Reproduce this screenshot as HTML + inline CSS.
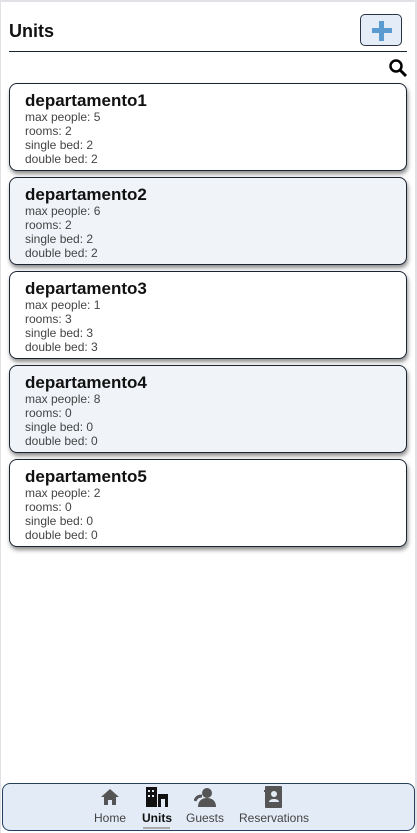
<!DOCTYPE html>
<html><head><meta charset="utf-8"><style>
*{box-sizing:border-box;margin:0;padding:0}
html,body{width:417px;height:833px;overflow:hidden;background:#fff;font-family:"Liberation Sans",Roboto,sans-serif}
.frame{position:absolute;left:0;top:0;width:417px;height:833px;border-top:2px solid #e2e2e6;border-left:1px solid #e2e2e6;border-right:2px solid #e2e2e6}
.title{position:absolute;left:9px;top:21px;font-size:18px;font-weight:bold;color:#111}
.hr{position:absolute;left:9px;top:51px;width:398px;height:1px;background:#1a2433}
.add{position:absolute;left:360px;top:14px;width:42px;height:32px;background:#e3ecf7;border:1px solid #2a3444;border-radius:5px}
.add:before{content:"";position:absolute;left:11px;top:13px;width:20px;height:5px;background:#5c9bd0}
.add:after{content:"";position:absolute;left:18px;top:6px;width:5px;height:20px;background:#5c9bd0}
.card{position:absolute;left:9px;width:398px;height:88px;border:1px solid #1a2433;border-radius:8px;box-shadow:1px 3px 4px rgba(0,0,0,.45);padding:7px 0 0 15px}
.card h2{font-size:17px;font-weight:bold;color:#111;line-height:19px}
.card p{font-size:12px;color:#444;line-height:14px}
.nav{position:absolute;left:2px;top:783px;width:413px;height:48px;background:#e3ecf6;border:1px solid #23405f;border-radius:8px}
.it{position:absolute;top:27px;font-size:12px;color:#444}
</style></head><body>
<div class="frame"></div>
<div class="title">Units</div>
<div class="add"></div>
<div class="hr"></div>
<svg style="position:absolute;left:388px;top:58px" width="20" height="20" viewBox="0 0 20 20"><circle cx="8" cy="8" r="5.5" fill="none" stroke="#000" stroke-width="2.5"/><line x1="12" y1="12" x2="18" y2="18" stroke="#000" stroke-width="3"/></svg>
<div class="card" style="top:83px;background:#fff"><h2>departamento1</h2><p>max people: 5</p><p>rooms: 2</p><p>single bed: 2</p><p>double bed: 2</p></div>
<div class="card" style="top:177px;background:#f0f4f9"><h2>departamento2</h2><p>max people: 6</p><p>rooms: 2</p><p>single bed: 2</p><p>double bed: 2</p></div>
<div class="card" style="top:271px;background:#fff"><h2>departamento3</h2><p>max people: 1</p><p>rooms: 3</p><p>single bed: 3</p><p>double bed: 3</p></div>
<div class="card" style="top:365px;background:#f0f4f9"><h2>departamento4</h2><p>max people: 8</p><p>rooms: 0</p><p>single bed: 0</p><p>double bed: 0</p></div>
<div class="card" style="top:459px;background:#fff"><h2>departamento5</h2><p>max people: 2</p><p>rooms: 0</p><p>single bed: 0</p><p>double bed: 0</p></div>
<div class="nav">
<svg style="position:absolute;left:97px;top:4px" width="20" height="18" viewBox="0 0 20 18"><path d="M10 1 L1 9 L4 9 L4 17 L8 17 L8 12 L12 12 L12 17 L16 17 L16 9 L19 9 Z" fill="#555"/></svg>
<div class="it" style="left:91px">Home</div>
<svg style="position:absolute;left:143px;top:3px" width="22" height="20" viewBox="0 0 22 20"><rect x="0" y="0" width="11" height="20" fill="#111"/><rect x="2" y="3" width="2" height="2" fill="#e3ecf6"/><rect x="6" y="3" width="2" height="2" fill="#e3ecf6"/><rect x="2" y="8" width="2" height="2" fill="#e3ecf6"/><rect x="6" y="8" width="2" height="2" fill="#e3ecf6"/><rect x="12" y="7" width="10" height="13" fill="#111"/><rect x="15" y="12" width="4" height="8" fill="#e3ecf6"/></svg>
<div class="it" style="left:139px;font-weight:bold;color:#111">Units</div>
<div style="position:absolute;left:140px;top:43px;width:27px;height:2px;background:#aaa"></div>
<svg style="position:absolute;left:191px;top:3px" width="24" height="20" viewBox="0 0 24 20"><circle cx="13" cy="6" r="5" fill="#555"/><path d="M4 20 C4 13 9 11 13 11 C17 11 22 13 22 20 Z" fill="#555"/><path d="M1 14 C2 10 5 9 8 9" stroke="#555" stroke-width="3" fill="none"/></svg>
<div class="it" style="left:183px">Guests</div>
<svg style="position:absolute;left:261px;top:2px" width="18" height="22" viewBox="0 0 18 22"><rect x="1" y="0" width="17" height="22" rx="1" fill="#555"/><rect x="0" y="4" width="3" height="2" fill="#555"/><circle cx="10" cy="8" r="3" fill="#e3ecf6"/><path d="M5 16 C5 12 15 12 15 16 Z" fill="#e3ecf6"/></svg>
<div class="it" style="left:236px">Reservations</div>
</div>
</body></html>
